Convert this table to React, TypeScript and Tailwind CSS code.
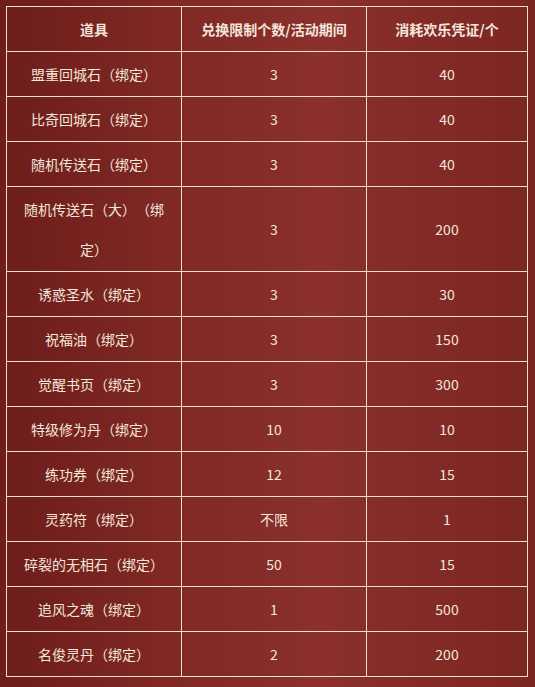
import React from "react";

const rows: [string, string, string][] = [
  ["盟重回城石（绑定）", "3", "40"],
  ["比奇回城石（绑定）", "3", "40"],
  ["随机传送石（绑定）", "3", "40"],
  ["随机传送石（大）（绑定）", "3", "200"],
  ["诱惑圣水（绑定）", "3", "30"],
  ["祝福油（绑定）", "3", "150"],
  ["觉醒书页（绑定）", "3", "300"],
  ["特级修为丹（绑定）", "10", "10"],
  ["练功券（绑定）", "12", "15"],
  ["灵药符（绑定）", "不限", "1"],
  ["碎裂的无相石（绑定）", "50", "15"],
  ["追风之魂（绑定）", "1", "500"],
  ["名俊灵丹（绑定）", "2", "200"],
];

export default function App() {
  return (
    <div
      className="w-[535px] h-[687px] pt-[6px] pl-[6px] bg-[linear-gradient(90deg,#6d1d1a_0%,#7f2824_30%,#8b302c_60%,#7b2521_100%)] text-[#f3e6dc] text-[14px] [text-spacing-trim:space-all]"
      style={{ fontFamily: '"Microsoft YaHei", "Noto Sans CJK SC", "Noto Sans", sans-serif' }}
    >
      <table className="border-collapse w-[521px] table-fixed">
        <colgroup>
          <col className="w-[175px]" />
          <col className="w-[185px]" />
          <col className="w-[161px]" />
        </colgroup>
        <thead>
          <tr>
            {["道具", "兑换限制个数/活动期间", "消耗欢乐凭证/个"].map((h) => (
              <th
                key={h}
                className="border border-[#efdfd3] px-[11px] py-[2px] leading-[40px] font-bold text-center"
              >
                {h}
              </th>
            ))}
          </tr>
        </thead>
        <tbody>
          {rows.map((r, i) => (
            <tr key={i}>
              {r.map((c, j) => (
                <td
                  key={j}
                  className="border border-[#efdfd3] px-[11px] py-[2px] leading-[40px] text-center font-normal"
                >
                  {c}
                </td>
              ))}
            </tr>
          ))}
        </tbody>
      </table>
    </div>
  );
}
